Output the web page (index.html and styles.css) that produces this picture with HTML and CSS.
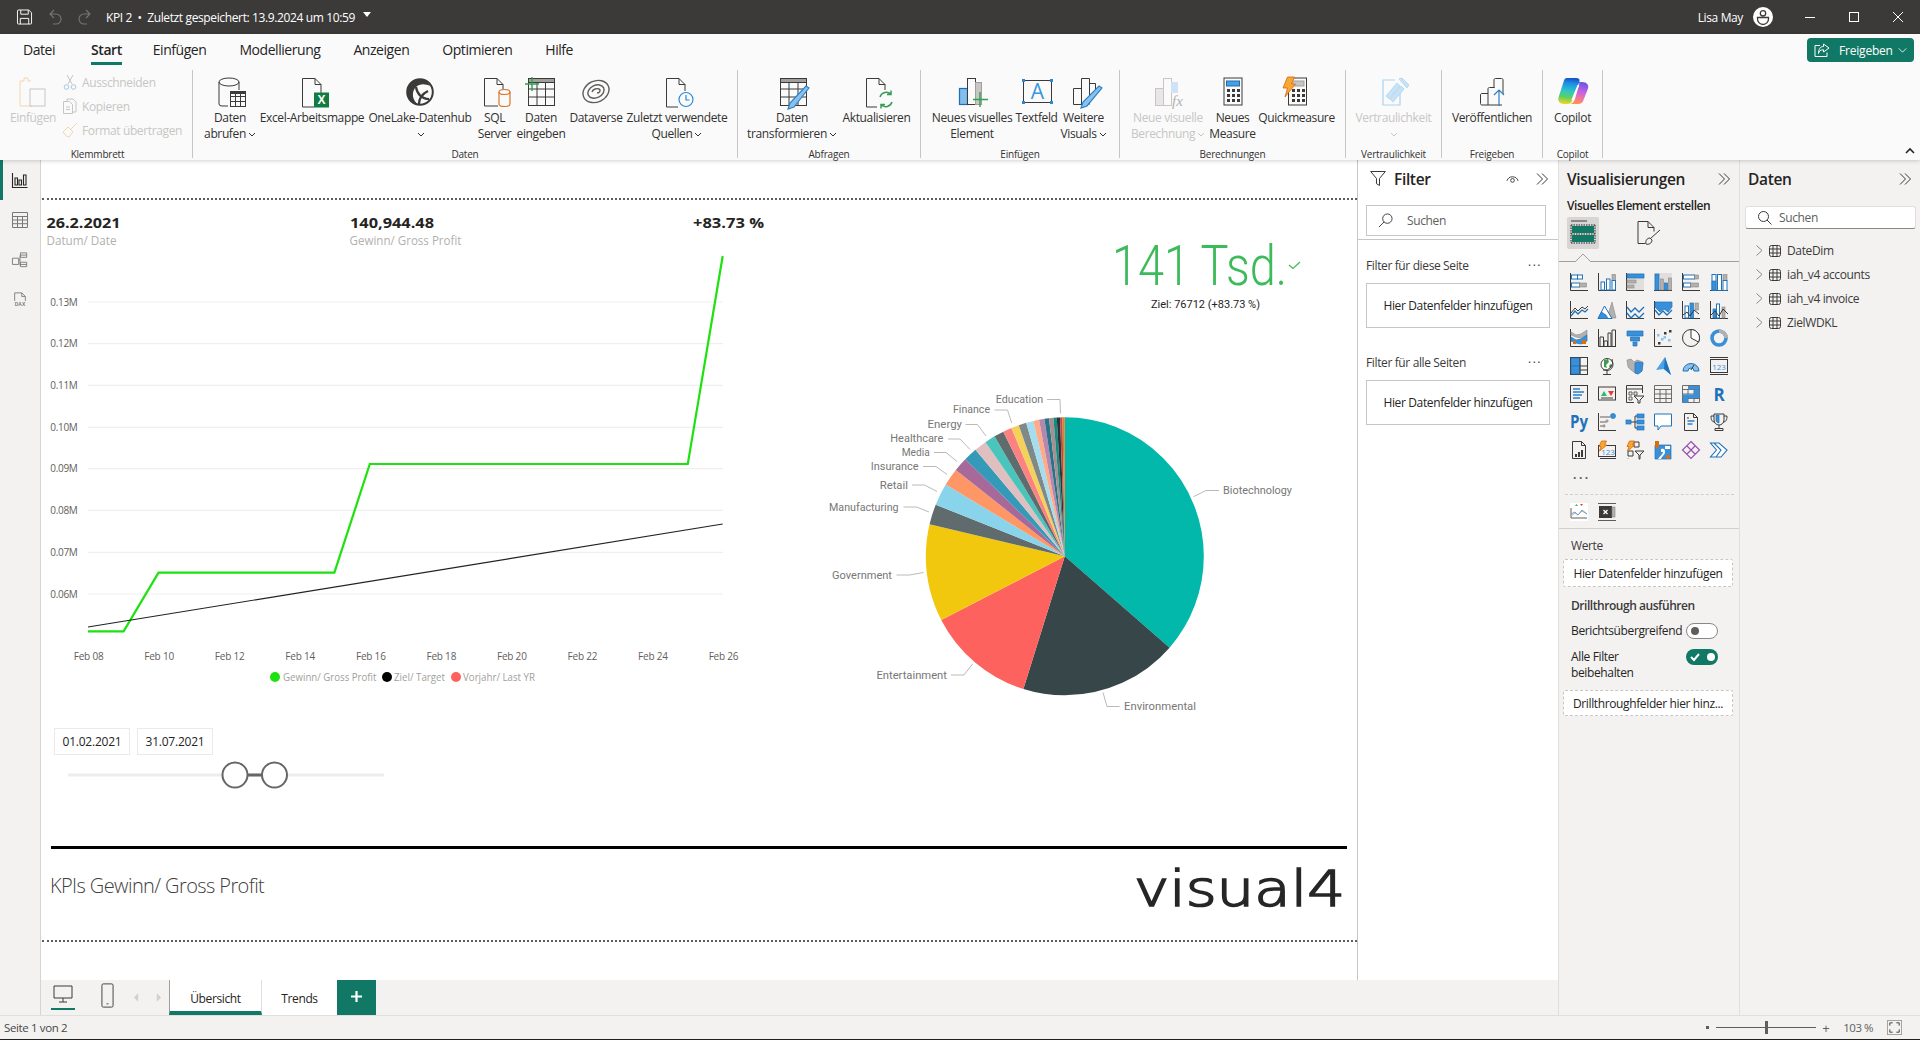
FILE: index.html
```html
<!DOCTYPE html>
<html lang="de">
<head>
<meta charset="utf-8">
<title>KPI 2 - Power BI Desktop</title>
<link rel="stylesheet" href="styles.css">
</head>
<body>
<div class="app">

  <header class="titlebar">
    <div class="qa">
      <svg class="qa-save" viewBox="0 0 16 16"><path class="tw" d="M.5 1.5a1 1 0 0 1 1-1h11l3 3v11a1 1 0 0 1-1 1h-13a1 1 0 0 1-1-1zM4 .5V5h8V.5M3.5 15.5V9.5h9v6"/></svg>
      <svg class="qa-undo" viewBox="0 0 14 16"><path class="td" d="M6 1 2 5l4 4M2 5h6a4.500 4.500 0 0 1 0 10H5"/></svg>
      <svg class="qa-redo" viewBox="0 0 14 16"><path class="td" d="M8 1l4 4-4 4M12 5H6a4.500 4.500 0 0 0 0 10h3"/></svg>
    </div>
    <span class="doc-title">KPI 2 &nbsp;•&nbsp; Zuletzt gespeichert: 13.9.2024 um 10:59</span>
    <svg class="doc-drop" viewBox="0 0 8 5"><path class="tf" d="M0 0h8L4 5z"/></svg>
    <div class="user">
      <span class="user-name">Lisa May</span>
      <svg class="avatar" viewBox="0 0 20 20"><circle class="av-bg" cx="10" cy="10" r="10"/><circle class="av-l" cx="10" cy="6.300" r="2.700"/><path class="av-l" d="M4.500 10.500h11v1.500a5.500 5.500 0 0 1-11 0z"/></svg>
    </div>
    <div class="win">
      <svg class="win-i" viewBox="0 0 10 10"><path class="tw" d="M0 5.500h10"/></svg>
      <svg class="win-i" viewBox="0 0 10 10"><rect class="tw" x=".5" y=".5" width="9" height="9"/></svg>
      <svg class="win-i" viewBox="0 0 10 10"><path class="tw" d="M0 0l10 10M10 0 0 10"/></svg>
    </div>
  </header>

  <section class="ribbon">
    <nav class="tabs">
      <span class="tab tab-first">Datei</span>
      <span class="tab active">Start</span>
      <span class="tab">Einfügen</span>
      <span class="tab">Modellierung</span>
      <span class="tab">Anzeigen</span>
      <span class="tab">Optimieren</span>
      <span class="tab">Hilfe</span>
      <button class="share">
        <svg class="share-i" viewBox="0 0 16 14"><path class="sw" d="M6 2.500H1v11h12V9.500M9.500 1 15 5 9.500 9V6.800C6.500 6.800 5 8 4.500 10.500 4.500 6.500 6 3.500 9.500 3.500z"/></svg>
        <span>Freigeben</span>
        <svg class="share-c" viewBox="0 0 10 6"><path class="sw" d="M.5.500 5 5 9.500.5"/></svg>
      </button>
    </nav>
    <div class="groups">

      <div class="grp g-clip">
        <div class="grp-body">
          <div class="rb rb-paste off">
            <svg class="ri" viewBox="0 0 32 32"><path class="oo" d="M14 4h-3V1h-4v3H3v25h12"/><rect class="og" x="13" y="12" width="15" height="17"/></svg>
            <span class="rl">Einfügen</span>
          </div>
          <div class="small off">
            <div class="sm"><svg class="smi" viewBox="0 0 16 16"><path class="og" d="M5 1l5 9M11 1 6 10"/><circle class="ob" cx="4.500" cy="13" r="2.300"/><circle class="ob" cx="11.500" cy="13" r="2.300"/></svg><span>Ausschneiden</span></div>
            <div class="sm"><svg class="smi" viewBox="0 0 16 16"><path class="og" d="M5 3V1h6l3 3v10h-3M1.500 3.500h6l3 3v9h-9zM4 9h4M4 11.500h4"/></svg><span>Kopieren</span></div>
            <div class="sm"><svg class="smi" viewBox="0 0 16 16"><path class="oo" d="M1 10l5-5 5 5-4 5C5 15 3 13 1 10zM9 7l6-6"/></svg><span>Format übertragen</span></div>
          </div>
        </div>
        <div class="grp-label">Klemmbrett</div>
      </div>

      <div class="grp g-data">
        <div class="grp-body">
          <div class="rb">
            <svg class="ri" viewBox="0 0 32 32"><ellipse class="ik" cx="15" cy="5" rx="10" ry="4"/><path class="ik" d="M5 5v22q0 2 3 2h6M25 5v8"/><rect class="ik iw" x="16.500" y="14.500" width="15" height="15"/><path class="ik" d="M16.500 19.500h15M16.500 24.500h15M21.500 14.500v15M26.500 14.500v15"/><rect class="id" x="16.500" y="14.500" width="15" height="2.500"/></svg>
            <span class="rl">Daten<br>abrufen<svg class="chev" viewBox="0 0 8 5"><path class="cv" d="M1 1l3 3 3-3"/></svg></span>
          </div>
          <div class="rb">
            <svg class="ri" viewBox="0 0 32 32"><path class="ik" d="M18 30H6.500V1.500H19l6 6V16M19 1.500v6h6"/><rect class="xl" x="18" y="15.500" width="15" height="15"/><text class="xl-t" x="25.500" y="27">X</text></svg>
            <span class="rl">Excel-Arbeitsmappe</span>
          </div>
          <div class="rb">
            <svg class="ri" viewBox="0 0 32 32"><circle class="ol" cx="16" cy="15" r="12.800"/><path class="id" d="M16 2C8 2 3 8 3 15c0 8 6 13 12 13C8 24 7 15 12 10c4-4 10-3 14-1-2-4-6-7-10-7z"/><path class="ol2" d="M12 10c1 7 6 12 13 12M15 27c0-6 3-10 9-13"/></svg>
            <span class="rl">OneLake-Datenhub<br><svg class="chev" viewBox="0 0 8 5"><path class="cv" d="M1 1l3 3 3-3"/></svg></span>
          </div>
          <div class="rb">
            <svg class="ri" viewBox="0 0 32 32"><path class="ik" d="M19 29H5.500V1.500H18l6 6V12M18 1.500v6h6"/><path class="oc iw" d="M20 15v12q0 2.500 5.500 2.500T31 27V15q0-2.500-5.500-2.500T20 15z"/><path class="oc" d="M20 15q0 2.500 5.500 2.500T31 15"/></svg>
            <span class="rl">SQL<br>Server</span>
          </div>
          <div class="rb">
            <svg class="ri" viewBox="0 0 32 32"><rect class="ik" x="3.500" y="1.500" width="26" height="27"/><rect class="ig" x="3.500" y="1.500" width="26" height="4"/><path class="ik" d="M3.500 12h26M3.500 20h26M12 5.500v23M20.500 5.500v23"/><path class="pl" d="M7 0v14M0 7h14"/></svg>
            <span class="rl">Daten<br>eingeben</span>
          </div>
          <div class="rb">
            <svg class="ri" viewBox="0 0 32 32"><ellipse class="iz" cx="16" cy="14.500" rx="13.500" ry="10.500" transform="rotate(-25 16 14.500)"/><ellipse class="iz" cx="16" cy="14.500" rx="8.500" ry="6.200" transform="rotate(-25 16 14.500)"/><path class="iz" d="M12 15c1-3 5-4 7-3s1 4-2 4"/></svg>
            <span class="rl">Dataverse</span>
          </div>
          <div class="rb">
            <svg class="ri" viewBox="0 0 32 32"><path class="ik" d="M17 30H5.500V1.500H18l6 6V14M18 1.500v6h6"/><circle class="cl iw" cx="25" cy="22.500" r="7"/><path class="cl" d="M25 18v5h3.500"/></svg>
            <span class="rl">Zuletzt verwendete<br>Quellen<svg class="chev" viewBox="0 0 8 5"><path class="cv" d="M1 1l3 3 3-3"/></svg></span>
          </div>
        </div>
        <div class="grp-label">Daten</div>
      </div>

      <div class="grp g-query">
        <div class="grp-body">
          <div class="rb">
            <svg class="ri" viewBox="0 0 32 32"><rect class="ik" x="4.500" y="1.500" width="26" height="27"/><rect class="ig" x="4.500" y="1.500" width="26" height="4"/><path class="ik" d="M4.500 12h26M4.500 20h26M13 5.500v23M22 5.500v23"/><path class="pn" d="M33 11l-3-2L14 26l-2 6 6-2z"/></svg>
            <span class="rl">Daten<br>transformieren<svg class="chev" viewBox="0 0 8 5"><path class="cv" d="M1 1l3 3 3-3"/></svg></span>
          </div>
          <div class="rb">
            <svg class="ri" viewBox="0 0 32 32"><path class="ik" d="M16 30H5.500V1.500H18l6 6V13M18 1.500v6h6"/><path class="rf" d="M19 20a6.500 6.500 0 0 1 11-2.500M31 25a6.500 6.500 0 0 1-11 2.500M30 13.500v4h-4M20 31.500v-4h4"/></svg>
            <span class="rl">Aktualisieren</span>
          </div>
        </div>
        <div class="grp-label">Abfragen</div>
      </div>

      <div class="grp g-insert">
        <div class="grp-body">
          <div class="rb">
            <svg class="ri" viewBox="0 0 32 32"><rect class="bl" x="3.500" y="11.500" width="8" height="16"/><rect class="ik iw" x="11.500" y="1.500" width="8" height="26"/><rect class="ig2" x="19.500" y="5.500" width="6" height="22"/><path class="pl" d="M24 15v15M17 22.500h15"/></svg>
            <span class="rl">Neues visuelles<br>Element</span>
          </div>
          <div class="rb">
            <svg class="ri" viewBox="0 0 32 32"><rect class="ik" x="2.500" y="3.500" width="28" height="22"/><path class="corn" d="M1 2h3v3H1zM29 2h3v3h-3zM1 24h3v3H1zM29 24h3v3h-3z"/><text class="a-t" x="16.500" y="22">A</text></svg>
            <span class="rl">Textfeld</span>
          </div>
          <div class="rb">
            <svg class="ri" viewBox="0 0 32 32"><path class="ik" d="M5.500 27.500v-16h8M13.500 27.500v-26h8v26M21.500 6.500h6v6M5.500 27.500h13"/><path class="pn" d="M34 11l-3-2L15 25l-2 6 6-2z"/></svg>
            <span class="rl">Weitere<br>Visuals<svg class="chev" viewBox="0 0 8 5"><path class="cv" d="M1 1l3 3 3-3"/></svg></span>
          </div>
        </div>
        <div class="grp-label">Einfügen</div>
      </div>

      <div class="grp g-calc">
        <div class="grp-body">
          <div class="rb off">
            <svg class="ri" viewBox="0 0 32 32"><rect class="dg" x="3.500" y="11.500" width="8" height="17"/><rect class="dw" x="11.500" y="1.500" width="8" height="27"/><rect class="dl" x="19.500" y="5.500" width="6" height="10"/><text class="fx" x="20" y="29">fx</text></svg>
            <span class="rl">Neue visuelle<br>Berechnung<svg class="chev" viewBox="0 0 8 5"><path class="cv" d="M1 1l3 3 3-3"/></svg></span>
          </div>
          <div class="rb">
            <svg class="ri" viewBox="0 0 32 32"><rect class="ik" x="7" y="1" width="18" height="27"/><rect class="calc-s" x="9.500" y="4" width="13" height="5"/><path class="dots" d="M10 12h3v3h-3zM15 12h3v3h-3zM20 12h3v3h-3zM10 17h3v3h-3zM15 17h3v3h-3zM20 17h3v3h-3zM10 22h3v3h-3zM15 22h3v3h-3zM20 22h3v3h-3z"/></svg>
            <span class="rl">Neues<br>Measure</span>
          </div>
          <div class="rb">
            <svg class="ri" viewBox="0 0 32 32"><rect class="ik" x="7.500" y="1" width="18" height="27"/><rect class="ig2" x="10" y="4" width="13" height="5"/><path class="dots" d="M11 12h3v3h-3zM16 12h3v3h-3zM21 12h3v3h-3zM11 17h3v3h-3zM16 17h3v3h-3zM21 17h3v3h-3zM11 22h3v3h-3zM16 22h3v3h-3zM21 22h3v3h-3z"/><path class="bolt" d="M6.500 0h7l-3 7h4L4 20l2.500-9H2z"/></svg>
            <span class="rl">Quickmeasure</span>
          </div>
        </div>
        <div class="grp-label">Berechnungen</div>
      </div>

      <div class="grp g-sens">
        <div class="grp-body">
          <div class="rb off">
            <svg class="ri" viewBox="0 0 32 32"><path class="lb" d="M17 3H5v25h17V13"/><path class="lbf" d="M8 19 19 6l3 3L11 22zM12 22 23 9l3 3-11 13zM21 2l3-1 7 7-2 3z"/></svg>
            <span class="rl">Vertraulichkeit<br><svg class="chev" viewBox="0 0 8 5"><path class="cv" d="M1 1l3 3 3-3"/></svg></span>
          </div>
        </div>
        <div class="grp-label">Vertraulichkeit</div>
      </div>

      <div class="grp g-share">
        <div class="grp-body">
          <div class="rb">
            <svg class="ri" viewBox="0 0 32 32"><path class="ik" d="M6 28h20M6 28c-1 0-1.500-.500-1.500-1.500V18c0-1 .5-1.500 1.500-1.500h6M12 28V12c0-1 .5-1.500 1.500-1.500h5M18 11V3c0-1 .5-1.500 1.500-1.500h6c1 0 1.500.500 1.500 1.500v14"/><path class="up" d="M23 29V13M18 18l5-5 5 5"/></svg>
            <span class="rl">Veröffentlichen</span>
          </div>
        </div>
        <div class="grp-label">Freigeben</div>
      </div>

      <div class="grp g-copilot">
        <div class="grp-body">
          <div class="rb">
            <svg class="ri" viewBox="0 0 32 32">
              <defs>
                <linearGradient id="cpa" x1="0.500" y1="0" x2="0.400" y2="1"><stop offset="0" stop-color="#1553c7"/><stop offset=".2" stop-color="#1b8fe6"/><stop offset=".5" stop-color="#2fc6c8"/><stop offset=".75" stop-color="#63d05c"/><stop offset="1" stop-color="#f5d423"/></linearGradient>
                <linearGradient id="cpb" x1="0.600" y1="0" x2="0.400" y2="1"><stop offset="0" stop-color="#6c55e2"/><stop offset=".45" stop-color="#cc62e2"/><stop offset=".8" stop-color="#f97a8a"/><stop offset="1" stop-color="#fb9a3f"/></linearGradient>
              </defs>
              <path class="cp-a" d="M10 1h9c3 0 4 1.500 3.500 3.500L16 22c-.8 3-3 5-6 5H7c-4.500 0-6.500-3-5.500-6.500L6.500 5C7.200 2.500 8 1 10 1z"/>
              <path class="cp-b" d="M22 5h3c5 0 7 3 6 6.500L26.500 23c-.8 2.500-2.500 4-5.500 4h-9c3 0 5-2 6-5l4-14c.4-1.500.3-3 0-3z"/>
              <path class="cp-w" d="M20.500 8l1.700.3L16 23.500l-1.800-.3z"/>
            </svg>
            <span class="rl">Copilot</span>
          </div>
        </div>
        <div class="grp-label">Copilot</div>
      </div>

      <svg class="collapse" viewBox="0 0 10 6"><path class="col" d="M1 5l4-4 4 4"/></svg>
    </div>
  </section>

  <div class="main">
    <aside class="rail">
      <div class="rail-btn rail-on"><svg class="rail-i" viewBox="0 0 16 16"><path class="rk" d="M.5 1v14.500h15M3 13V6h2.500v7zM7 13V8h2.500v5zM11.500 13V3H14v10z"/></svg></div>
      <div class="rail-btn"><svg class="rail-i" viewBox="0 0 16 16"><path class="rg" d="M.5.500h15v15H.5zM.5 4.500h15M.5 8h15M.5 11.700h15M5.500 4.500v11M10.500 4.500v11"/></svg></div>
      <div class="rail-btn"><svg class="rail-i" viewBox="0 0 18 18"><path class="rg" d="M.5 7h7v7h-7zM9.500 1h7v5h-7zM9.500 11.500h7v5h-7zM9.500 3.500h7M9.500 14h7M7.500 9H9M9 4v11"/></svg></div>
      <div class="rail-btn"><svg class="rail-i" viewBox="0 0 18 18"><path class="rg" d="M3 10V1h8l4 4v5M11 1v4h4"/><text class="dax" x="9" y="16">DAX</text></svg></div>
    </aside>

    <div class="center">
      <div class="work">
        <main class="canvas">
          <svg class="v-line" viewBox="41 200 760 500">
            <text class="hd" x="46.500" y="228" textLength="74" lengthAdjust="spacingAndGlyphs">26.2.2021</text>
            <text class="hs" x="46.500" y="245" textLength="70" lengthAdjust="spacingAndGlyphs">Datum/ Date</text>
            <text class="hd" x="350" y="228" textLength="84" lengthAdjust="spacingAndGlyphs">140,944.48</text>
            <text class="hs" x="349.500" y="245" textLength="112" lengthAdjust="spacingAndGlyphs">Gewinn/ Gross Profit</text>
            <text class="hd" x="693" y="228" textLength="71" lengthAdjust="spacingAndGlyphs">+83.73 %</text>
            <path class="grid" d="M88 302h635M88 343.700h635M88 385.300h635M88 427.300h635M88 468.700h635M88 510.300h635M88 552.300h635M88 594h635"/>
            <text class="yl" x="77.500" y="305.500">0.13M</text>
            <text class="yl" x="77.500" y="347">0.12M</text>
            <text class="yl" x="77.500" y="389">0.11M</text>
            <text class="yl" x="77.500" y="430.500">0.10M</text>
            <text class="yl" x="77.500" y="472">0.09M</text>
            <text class="yl" x="77.500" y="514">0.08M</text>
            <text class="yl" x="77.500" y="555.500">0.07M</text>
            <text class="yl" x="77.500" y="597.500">0.06M</text>
            <polyline class="ln-g" points="88,631.300 123.600,631.300 158.500,572.700 334.400,572.700 369.800,464 687.800,464 722.700,256"/>
            <line class="ln-k" x1="88" y1="627" x2="722.700" y2="524"/>
            <text class="xl-l" x="88.600" y="660">Feb 08</text>
            <text class="xl-l" x="159.100" y="660">Feb 10</text>
            <text class="xl-l" x="229.700" y="660">Feb 12</text>
            <text class="xl-l" x="300.200" y="660">Feb 14</text>
            <text class="xl-l" x="370.800" y="660">Feb 16</text>
            <text class="xl-l" x="441.300" y="660">Feb 18</text>
            <text class="xl-l" x="511.800" y="660">Feb 20</text>
            <text class="xl-l" x="582.400" y="660">Feb 22</text>
            <text class="xl-l" x="652.900" y="660">Feb 24</text>
            <text class="xl-l" x="723.500" y="660">Feb 26</text>
            <circle class="lg-g" cx="275" cy="677" r="5"/>
            <text class="lg" x="283" y="680.500" textLength="93.500" lengthAdjust="spacingAndGlyphs">Gewinn/ Gross Profit</text>
            <circle class="lg-k" cx="387" cy="677" r="5"/>
            <text class="lg" x="394" y="680.500" textLength="51" lengthAdjust="spacingAndGlyphs">Ziel/ Target</text>
            <circle class="lg-r" cx="456" cy="677" r="5"/>
            <text class="lg" x="463" y="680.500" textLength="72" lengthAdjust="spacingAndGlyphs">Vorjahr/ Last YR</text>
          </svg>

          <div class="slicer">
            <div class="dates"><span class="date">01.02.2021</span><span class="date">31.07.2021</span></div>
            <svg class="track" viewBox="0 0 320 30"><path class="trk" d="M0 15h316"/><path class="trk-on" d="M167 15h40"/><circle class="hdl" cx="167" cy="15" r="12.500"/><circle class="hdl" cx="206.500" cy="15" r="12.500"/></svg>
          </div>

          <svg class="v-kpi" viewBox="1100 230 220 90">
            <text class="kpi-n" x="1112" y="285" textLength="175" lengthAdjust="spacingAndGlyphs">141 Tsd.</text>
            <path class="kpi-c" d="M1289 265l4 3.500 7-6.500"/>
            <text class="kpi-t" x="1151" y="307.500" textLength="109" lengthAdjust="spacingAndGlyphs">Ziel: 76712 (+83.73 %)</text>
          </svg>

          <svg class="v-pie" viewBox="820 380 520 350">
            <g class="pie" transform="translate(1 0) rotate(-90 1063.800 556.300)">
              <circle class="s1" cx="1063.800" cy="556.300" r="69.500" pathLength="360" stroke-dasharray="131.100 360"/>
              <circle class="s2" cx="1063.800" cy="556.300" r="69.500" pathLength="360" stroke-dasharray="66.300 360" stroke-dashoffset="-131.100"/>
              <circle class="s3" cx="1063.800" cy="556.300" r="69.500" pathLength="360" stroke-dasharray="45.300 360" stroke-dashoffset="-197.400"/>
              <circle class="s4" cx="1063.800" cy="556.300" r="69.500" pathLength="360" stroke-dasharray="40.700 360" stroke-dashoffset="-242.700"/>
              <circle class="s5" cx="1063.800" cy="556.300" r="69.500" pathLength="360" stroke-dasharray="8.400 360" stroke-dashoffset="-283.400"/>
              <circle class="s6" cx="1063.800" cy="556.300" r="69.500" pathLength="360" stroke-dasharray="9.300 360" stroke-dashoffset="-291.800"/>
              <circle class="s7" cx="1063.800" cy="556.300" r="69.500" pathLength="360" stroke-dasharray="7.300 360" stroke-dashoffset="-301.100"/>
              <circle class="s8" cx="1063.800" cy="556.300" r="69.500" pathLength="360" stroke-dasharray="5.900 360" stroke-dashoffset="-308.400"/>
              <circle class="s9" cx="1063.800" cy="556.300" r="69.500" pathLength="360" stroke-dasharray="5.700 360" stroke-dashoffset="-314.300"/>
              <circle class="s10" cx="1063.800" cy="556.300" r="69.500" pathLength="360" stroke-dasharray="5.200 360" stroke-dashoffset="-320"/>
              <circle class="s11" cx="1063.800" cy="556.300" r="69.500" pathLength="360" stroke-dasharray="4.400 360" stroke-dashoffset="-325.200"/>
              <circle class="s12" cx="1063.800" cy="556.300" r="69.500" pathLength="360" stroke-dasharray="4.100 360" stroke-dashoffset="-329.600"/>
              <circle class="s13" cx="1063.800" cy="556.300" r="69.500" pathLength="360" stroke-dasharray="3.700 360" stroke-dashoffset="-333.700"/>
              <circle class="s14" cx="1063.800" cy="556.300" r="69.500" pathLength="360" stroke-dasharray="3.200 360" stroke-dashoffset="-337.400"/>
              <circle class="s15" cx="1063.800" cy="556.300" r="69.500" pathLength="360" stroke-dasharray="3.200 360" stroke-dashoffset="-340.600"/>
              <circle class="s16" cx="1063.800" cy="556.300" r="69.500" pathLength="360" stroke-dasharray="3.100 360" stroke-dashoffset="-343.800"/>
              <circle class="s17" cx="1063.800" cy="556.300" r="69.500" pathLength="360" stroke-dasharray="2.400 360" stroke-dashoffset="-346.900"/>
              <circle class="s18" cx="1063.800" cy="556.300" r="69.500" pathLength="360" stroke-dasharray="2.200 360" stroke-dashoffset="-349.300"/>
              <circle class="s19" cx="1063.800" cy="556.300" r="69.500" pathLength="360" stroke-dasharray="1.900 360" stroke-dashoffset="-351.500"/>
              <circle class="s20" cx="1063.800" cy="556.300" r="69.500" pathLength="360" stroke-dasharray="1.800 360" stroke-dashoffset="-353.400"/>
              <circle class="s21" cx="1063.800" cy="556.300" r="69.500" pathLength="360" stroke-dasharray="1.400 360" stroke-dashoffset="-355.200"/>
              <circle class="s22" cx="1063.800" cy="556.300" r="69.500" pathLength="360" stroke-dasharray="1.400 360" stroke-dashoffset="-356.600"/>
              <circle class="s23" cx="1063.800" cy="556.300" r="69.500" pathLength="360" stroke-dasharray="1 360" stroke-dashoffset="-358"/>
              <circle class="s24" cx="1063.800" cy="556.300" r="69.500" pathLength="360" stroke-dasharray="1 360" stroke-dashoffset="-359"/>
            </g>
            <path class="ldr" d="M1193.500 496.700 1206 490.500h13M1103 692.500 1107 706.500h12.500M972.500 664 964 675h-13M923.500 572.500 909.500 575h-13M929 512 916.500 507h-13M937 491.500 924.500 485h-12.500M947 474.500 936 466.500h-13M957 461.500 946 452.500h-12M970 449.500 960 439h-12M986 436 977.500 424.500h-12M1011.700 423 1007.500 410h-13M1060.500 413.500 1060 399.500h-13"/>
            <text class="pl-t" x="1223" y="494" textLength="69" lengthAdjust="spacingAndGlyphs">Biotechnology</text>
            <text class="pl-t" x="1124" y="709.500" textLength="72" lengthAdjust="spacingAndGlyphs">Environmental</text>
            <text class="pl-t" x="876.400" y="679" textLength="70.600" lengthAdjust="spacingAndGlyphs">Entertainment</text>
            <text class="pl-t" x="832" y="579" textLength="60" lengthAdjust="spacingAndGlyphs">Government</text>
            <text class="pl-t" x="829" y="511" textLength="69.600" lengthAdjust="spacingAndGlyphs">Manufacturing</text>
            <text class="pl-t" x="879.700" y="489" textLength="28.300" lengthAdjust="spacingAndGlyphs">Retail</text>
            <text class="pl-t" x="870.700" y="470" textLength="47.800" lengthAdjust="spacingAndGlyphs">Insurance</text>
            <text class="pl-t" x="901.700" y="456" textLength="28" lengthAdjust="spacingAndGlyphs">Media</text>
            <text class="pl-t" x="890.300" y="442" textLength="53" lengthAdjust="spacingAndGlyphs">Healthcare</text>
            <text class="pl-t" x="927.600" y="428" textLength="34.400" lengthAdjust="spacingAndGlyphs">Energy</text>
            <text class="pl-t" x="953" y="413" textLength="37" lengthAdjust="spacingAndGlyphs">Finance</text>
            <text class="pl-t" x="995.800" y="403" textLength="47.400" lengthAdjust="spacingAndGlyphs">Education</text>
          </svg>

          <div class="rule"></div>
          <div class="page-title">KPIs Gewinn/ Gross Profit</div>
          <svg class="logo" viewBox="1130 865 220 50"><text class="logo-t" x="1134" y="906" textLength="211" lengthAdjust="spacingAndGlyphs">visual4</text></svg>
          <div class="dots-top"></div>
          <div class="dots-bot"></div>
        </main>

        <aside class="filter">
          <div class="pane-head">
            <svg class="f-ic" viewBox="0 0 16 15"><path class="pk" d="M.7.500h14.600L9.500 7.500v7l-3-1.800V7.500z"/></svg>
            <span class="pane-title f-title">Filter</span>
            <svg class="eye" viewBox="0 0 14 10"><path class="pk2" d="M1 7a6.300 6.300 0 0 1 12 0"/><circle class="pk2" cx="7" cy="6.500" r="2"/></svg>
            <svg class="dbl" viewBox="0 0 12 12"><path class="pk" d="M1 .5 6.500 6 1 11.500M6 .5 11.500 6 6 11.500"/></svg>
          </div>
          <div class="f-search">
            <svg class="s-ic" viewBox="0 0 16 16"><circle class="pk2" cx="10" cy="6" r="5"/><path class="pk2" d="M6.500 9.500 1 15"/></svg>
            <span>Suchen</span>
          </div>
          <div class="f-label f-label-1"><span>Filter für diese Seite</span><span class="more">...</span></div>
          <div class="f-drop">Hier Datenfelder hinzufügen</div>
          <div class="f-label f-label-2"><span>Filter für alle Seiten</span><span class="more">...</span></div>
          <div class="f-drop">Hier Datenfelder hinzufügen</div>
        </aside>
      </div>

      <footer class="pagebar">
        <div class="view-sw">
          <div class="view view-on"><svg class="view-i" viewBox="0 0 20 20"><path class="pk" d="M1 2h18v12H1zM10 14v4M6 18h8"/></svg></div>
          <div class="view"><svg class="view-i" viewBox="0 0 14 26"><rect class="pk" x="1" y=".5" width="12" height="25" rx="1.500"/><path class="pk" d="M6 22h2"/></svg></div>
          <svg class="arr" viewBox="0 0 6 10"><path class="arr-f" d="M5 0v10L0 5z"/></svg>
          <svg class="arr arr-r" viewBox="0 0 6 10"><path class="arr-f" d="M1 0v10l5-5z"/></svg>
        </div>
        <div class="ptab ptab-on">Übersicht</div>
        <div class="ptab ptab-2">Trends</div>
        <div class="ptab-add"><svg class="add-i" viewBox="0 0 12 12"><path class="add" d="M6 0v12M0 6h12"/></svg></div>
      </footer>
    </div>

    <aside class="viz">
      <div class="pane-head">
        <span class="pane-title">Visualisierungen</span>
        <svg class="dbl" viewBox="0 0 12 12"><path class="pk" d="M1 .5 6.500 6 1 11.500M6 .5 11.500 6 6 11.500"/></svg>
      </div>
      <div class="viz-sub">Visuelles Element erstellen</div>
      <div class="viz-build">
        <div class="build-on"><svg class="build-i" viewBox="0 0 24 24"><path class="bt" d="M0 0h16"/><rect class="bgn" x="1" y="5" width="22" height="7"/><rect class="bgn" x="1" y="14" width="22" height="7"/><path class="bt2" d="M0 4h24M0 13h24M0 22h24M0 4v18M24 4v18"/></svg></div>
        <svg class="fmt-i" viewBox="0 0 24 24"><path class="pk" d="M8 22.500H1V.5h10l6 6v4M11 .5v6h6"/><path class="pk" d="M23 9 14 17M9 23c-1-3 1-6 4-6l2 2c0 3-3 5-6 4z"/></svg>
        <svg class="notch" viewBox="0 0 16 8"><path class="nt" d="M0 8 8 0l8 8"/></svg>
      </div>
      <div class="vgrid">
        <svg class="vi" viewBox="0 0 18 18"><path class="a" d="M.5 0v17.500H18"/><rect class="w" x="1.500" y="2" width="6" height="4"/><rect class="w" x="7.500" y="2" width="5" height="4"/><rect class="w" x="1.500" y="10" width="8" height="4"/><rect class="g" x="9.500" y="10" width="7" height="4"/></svg>
        <svg class="vi" viewBox="0 0 18 18"><path class="a" d="M.5 0v17.500H18"/><rect class="w" x="3" y="9" width="3.500" height="8"/><rect class="w" x="8.500" y="6" width="3.500" height="11"/><rect class="g" x="14" y="1.500" width="3.500" height="6"/><rect class="w" x="14" y="7.500" width="3.500" height="9.500"/></svg>
        <svg class="vi" viewBox="0 0 18 18"><rect class="hl" width="18" height="18"/><path class="a" d="M.5 0v17.500H18"/><rect class="b" x="1" y="1" width="17" height="4"/><rect class="g" x="1" y="7" width="9" height="3"/><rect class="g" x="1" y="12" width="7" height="3"/></svg>
        <svg class="vi" viewBox="0 0 18 18"><rect class="hl" width="18" height="18"/><path class="a" d="M0 17.500h18"/><rect class="b" x="1" y="1" width="4" height="16"/><rect class="g" x="6.500" y="6" width="3" height="11"/><rect class="b" x="10.500" y="10" width="3" height="7"/><rect class="g" x="14.500" y="5" width="3" height="12"/></svg>
        <svg class="vi" viewBox="0 0 18 18"><path class="a" d="M.5 0v17.500H18"/><rect class="w" x="1.500" y="2" width="11" height="4"/><rect class="g" x="12.500" y="2" width="4" height="4"/><rect class="w" x="1.500" y="10" width="7" height="4"/><rect class="g" x="8.500" y="10" width="8" height="4"/></svg>
        <svg class="vi" viewBox="0 0 18 18"><path class="a" d="M0 17.500h18"/><rect class="w" x="2" y="1.500" width="4" height="16"/><rect class="b" x="2" y="8" width="4" height="9"/><rect class="w" x="7.500" y="1.500" width="4" height="16"/><rect class="g" x="13" y="1.500" width="4" height="6"/><rect class="w" x="13" y="7.500" width="4" height="10"/></svg>

        <svg class="vi" viewBox="0 0 18 18"><path class="a" d="M.5 0v17.500H18"/><path class="a" d="M1 12l4-5 3 3 4-4 3 2 3-3"/><path class="l" d="M1 15l4-5 3 3 4-4 3 2 3-3"/></svg>
        <svg class="vi" viewBox="0 0 18 18"><path class="g" d="M9 17 14 1l4 16z"/><path class="w" d="M0 17.500 6.500 5 14 17.500z"/><path class="b" d="M0 17.500 3.500 11 8 14l2 3.500z"/></svg>
        <svg class="vi" viewBox="0 0 18 18"><path class="a" d="M.5 0v17.500H18"/><path class="l" d="M1 6l4 5 4-4 4 4 5-5"/><path class="l" d="M1 12l4 5 4-4 4 4 5-5"/></svg>
        <svg class="vi" viewBox="0 0 18 18"><path class="a" d="M.5 0v17.500H18"/><path class="b" d="M1 1h17v5l-4 5-4-3-4 3-5-5z"/><path class="l" d="M1 9l4 5 4-4 4 4 5-5"/></svg>
        <svg class="vi" viewBox="0 0 18 18"><path class="a" d="M.5 0v17.500H18"/><rect class="w" x="3" y="5" width="3.500" height="12"/><rect class="b" x="8" y="2" width="3.500" height="15"/><rect class="g" x="13" y="2" width="3.500" height="7"/><path class="a" d="M1 14l4-3 3 4 4-6 5 4"/></svg>
        <svg class="vi" viewBox="0 0 18 18"><path class="a" d="M.5 0v17.500H18"/><rect class="b" x="3" y="8" width="3" height="9"/><rect class="w" x="6.500" y="3" width="3" height="14"/><rect class="g" x="12" y="6" width="3" height="11"/><path class="a" d="M1 14l4-4 4 5 4-7 5 5"/></svg>

        <svg class="vi" viewBox="0 0 18 18"><path class="a" d="M.5 0v17.500H18"/><path class="g" d="M1 3l5 3 5-1 6-4v5l-6 3-5-1-5-2z"/><path class="b" d="M1 8l5 3 5-1 6-4v6l-6 3-5-1-5-2z"/><path class="or" d="M3 12h3v3H3zM12 11h4v4h-4z"/></svg>
        <svg class="vi" viewBox="0 0 18 18"><path class="a" d="M.5 0v17.500H18"/><path class="ww" d="M2 17V8h3.500v9M6 17V12h3.500v5M10 17V4h3v13M14 17V1h3.500v16"/></svg>
        <svg class="vi" viewBox="0 0 18 18"><path class="b" d="M1 2h16v5H1zM4.500 8h9v4h-9zM7 13h4v4H7z"/></svg>
        <svg class="vi" viewBox="0 0 18 18"><path class="a" d="M.5 0v17.500H18"/><path class="dk" d="M4 13h2.500v2.500H4zM10 3h2.500v2.500H10zM15 1h2.500v2.500H15z"/><path class="lbx" d="M3 5h2.500v2.500H3zM7 9h2.500v2.500H7zM14 10h2.500v2.500H14zM9.500 7H12v2.500H9.500z"/></svg>
        <svg class="vi" viewBox="0 0 18 18"><circle class="a" cx="9" cy="9" r="8.500"/><path class="piew" d="M9 .5A8.500 8.500 0 0 1 16.500 13L9 9z"/></svg>
        <svg class="vi" viewBox="0 0 18 18"><circle class="don" cx="9" cy="9" r="7"/><path class="don2" d="M9 2a7 7 0 0 1 7 7"/></svg>

        <svg class="vi" viewBox="0 0 18 18"><rect class="a" x=".5" y=".5" width="17" height="17"/><rect class="b" x="1" y="1" width="9" height="8"/><rect class="b" x="1" y="9" width="9" height="8"/><path class="a" d="M10 .5v17M10 9h8M10 13h8"/></svg>
        <svg class="vi" viewBox="0 0 18 18"><circle class="glb" cx="9" cy="7.500" r="6"/><path class="grn" d="M6 3l4-1 1 3-3 3 1 3-3-1zM12 7l2 1-1 3-2-1z"/><path class="a" d="M14 2a8 8 0 0 1-9 11M9 14v3M5 17.500h8"/></svg>
        <svg class="vi" viewBox="0 0 18 18"><path class="g" d="M1 3l4-1 3 3 3-2 6 2-1 9-4 3-3-1-4-3-3-3z"/><path class="b" d="M9 6l3-1 5 1-1 8-4 3-3-1z"/></svg>
        <svg class="vi" viewBox="0 0 18 18"><path class="azr" d="M11 0 17 18 10 12 2 13z"/><path class="azr2" d="M11 0 10 12 17 18z"/></svg>
        <svg class="vi" viewBox="0 0 18 18"><path class="gau" d="M1 14a8 7.500 0 0 1 16 0h-5a3 3 0 0 0-6 0z"/><path class="a" d="M9 13l3-5"/></svg>
        <svg class="vi" viewBox="0 0 18 18"><rect class="a" x=".5" y="2.500" width="17" height="13"/><path class="a" d="M0 .5h18M0 17.500h18"/><text class="vt12" x="9" y="12.500">123</text></svg>

        <svg class="vi" viewBox="0 0 18 18"><rect class="a" x=".5" y=".5" width="17" height="17"/><path class="bs" d="M3 4h7M3 7h11M3 10h9M3 13h7"/></svg>
        <svg class="vi" viewBox="0 0 18 18"><rect class="a" x=".5" y="2" width="17" height="13"/><path class="tg" d="M3 11 6 6l3 5z"/><path class="tr" d="M10 6h6l-3 5z"/><path class="a" d="M3 13h12"/></svg>
        <svg class="vi" viewBox="0 0 18 18"><path class="a" d="M.5 17.500V.5h16V8M.5 4h16M.5 17.500H8"/><path class="g2" d="M3 7h3v3H3zM8 7h3v3H8zM3 12h3v3H3z"/><path class="a" d="M8 11h10l-4 4v3h-2v-3z"/></svg>
        <svg class="vi" viewBox="0 0 18 18"><path class="tb" d="M.5.500h17v17H.5zM.5 4.500h17M.5 9h17M.5 13.500h17M6 4.500v13M12 4.500v13"/></svg>
        <svg class="vi" viewBox="0 0 18 18"><path class="tb" d="M.5.500h17v17H.5zM.5 4.500h17M.5 9h17M.5 13.500h17M6 4.500v13M12 4.500v13"/><path class="bf" d="M6 1h11.500v3.500H6zM12 5h5.500v8H12zM6 9.500h6v4H6zM1 9.500h5v8H1z"/></svg>
        <svg class="vi" viewBox="0 0 18 18"><text class="vr" x="9" y="15.500">R</text></svg>

        <svg class="vi" viewBox="0 0 18 18"><text class="vpy" x="9" y="14.500" textLength="18" lengthAdjust="spacingAndGlyphs">Py</text></svg>
        <svg class="vi" viewBox="0 0 18 18"><path class="a" d="M.5 0v17.500H18"/><path class="a2" d="M2 4h10M2 9h6l2-1M2 13h3l2-1"/><circle class="b" cx="15" cy="3" r="2.500"/><circle class="g" cx="9" cy="8" r="1.200"/><circle class="g" cx="6" cy="13" r="1.200"/></svg>
        <svg class="vi" viewBox="0 0 18 18"><rect class="b" x="0" y="7" width="5" height="4"/><path class="a" d="M5 9h4M9 3v12M9 3h2M9 9h2M9 15h2"/><rect class="b" x="11" y="1" width="7" height="4"/><rect class="b" x="11" y="7" width="7" height="4"/><rect class="b" x="11" y="13" width="7" height="4"/></svg>
        <svg class="vi" viewBox="0 0 18 18"><path class="qa2" d="M.5 1h17v12H7l-3 4v-4H.5z"/></svg>
        <svg class="vi" viewBox="0 0 18 18"><path class="a" d="M2.500 17.500V.5h9l4 4v13zM11.500.5v4h4"/><path class="bs" d="M5.500 8h7M5.500 11h5"/><path class="a" d="M5 5h2"/></svg>
        <svg class="vi" viewBox="0 0 18 18"><path class="a" d="M4 1h10v6a5 5 0 0 1-10 0zM4 3H1c0 4 1 6 4 6M14 3h3c0 4-1 6-4 6M9 12v3M5 17.500h8v-2H5z"/><path class="b" d="M6 2h3v8c-2 0-3-2-3-3z"/></svg>

        <svg class="vi" viewBox="0 0 18 18"><path class="a" d="M2.500 17.500V.5h9l4 4v13zM11.500.5v4h4"/><path class="dk2" d="M5 13h2v3H5zM8 11h2v5H8zM11 9h2v7h-2z"/></svg>
        <svg class="vi" viewBox="0 0 18 18"><rect class="a" x=".5" y="4.500" width="17" height="11"/><path class="a" d="M2 17.500h16"/><text class="vt12" x="10" y="14">123</text><path class="bolt" d="M3.500 0h5l-2 4h2.500L1.500 10l1.500-4.500H1z"/></svg>
        <svg class="vi" viewBox="0 0 18 18"><path class="a" d="M8 1h5v5H8zM2 10h5v5H2zM2 17.500V17M9 10h9l-4 4v4h-1v-4z"/><path class="bolt" d="M3.500 0h5l-2 4h2.500L1.500 10l1.500-4.500H1z"/></svg>
        <svg class="vi" viewBox="0 0 18 18"><path class="b" d="M1 4h16v14H1z"/><path class="w2" d="M7 8c3-1 4 0 4 3s-3 4-4 7H4c2-3 5-5 5-7H7zM11 5h5v3h-5z"/><path class="or" d="M1 0h4v5l-2 3-2-3zM14 14a2 2 0 1 1 0 4 2 2 0 0 1 0-4z"/></svg>
        <svg class="vi" viewBox="0 0 18 18"><path class="pa" d="M9 .5 17.500 9 9 17.500.5 9zM5 5l8 8M13 5l-8 8"/></svg>
        <svg class="vi" viewBox="0 0 18 18"><path class="au" d="M.5 2H9l8 7-6 7H.5l6-7zM4 2l7 7-5 7"/></svg>
      </div>
      <div class="more-row">...</div>
      <div class="dash-line"></div>
      <div class="custom">
        <svg class="vi cust" viewBox="0 0 18 18"><rect class="wf" width="18" height="18"/><path class="tg" d="M5 3h3L6.500 1z"/><path class="tr" d="M10 1h3l-1.500 2z"/><path class="a2" d="M1 5v10h16"/><path class="or2" d="M1 13l4-3 3 2 4-4 5 3"/><path class="bs2" d="M1 11l4-2 3 3 4-5 5 4"/></svg>
        <svg class="vi cust" viewBox="0 0 18 18"><path class="a2" d="M0 .5h18M0 17.500h18"/><rect class="dk2" x="1" y="3" width="13" height="12"/><rect class="g" x="14" y="4" width="3" height="10"/><path class="xw" d="M5.500 7l4 4M9.500 7l-4 4"/></svg>
      </div>
      <div class="fields">
        <div class="fld-l">Werte</div>
        <div class="fld-drop fld-d1">Hier Datenfelder hinzufügen</div>
        <div class="fld-h">Drillthrough ausführen</div>
        <div class="fld-row fld-r1"><span>Berichtsübergreifend</span><span class="tog tog-off"><i class="knob"></i></span></div>
        <div class="fld-row fld-r2"><span>Alle Filter<br>beibehalten</span><span class="tog tog-on"><svg class="tog-c" viewBox="0 0 10 8"><path class="tc" d="M1 4l3 3 5-6"/></svg><i class="knob knob-w"></i></span></div>
        <div class="fld-drop fld-d2">Drillthroughfelder hier hinz...</div>
      </div>
    </aside>

    <aside class="data">
      <div class="pane-head">
        <span class="pane-title">Daten</span>
        <svg class="dbl" viewBox="0 0 12 12"><path class="pk" d="M1 .5 6.500 6 1 11.500M6 .5 11.500 6 6 11.500"/></svg>
      </div>
      <div class="d-search">
        <svg class="d-ic" viewBox="0 0 14 14"><circle class="pk2" cx="5.500" cy="5.500" r="5"/><path class="pk2" d="M9 9l4.500 4.500"/></svg>
        <span>Suchen</span>
      </div>
      <div class="tree">
        <div class="node"><svg class="nc" viewBox="0 0 7 11"><path class="nch" d="M.5.500l5.500 5-5.500 5"/></svg><svg class="nt-i" viewBox="0 0 12 12"><rect class="ntb" x=".5" y=".5" width="11" height="11" rx="2"/><path class="ntb" d="M.5 4h11M.5 8h11M4 .5v11M8 .5v11"/></svg><span>DateDim</span></div>
        <div class="node"><svg class="nc" viewBox="0 0 7 11"><path class="nch" d="M.5.500l5.500 5-5.500 5"/></svg><svg class="nt-i" viewBox="0 0 12 12"><rect class="ntb" x=".5" y=".5" width="11" height="11" rx="2"/><path class="ntb" d="M.5 4h11M.5 8h11M4 .5v11M8 .5v11"/></svg><span>iah_v4 accounts</span></div>
        <div class="node"><svg class="nc" viewBox="0 0 7 11"><path class="nch" d="M.5.500l5.500 5-5.500 5"/></svg><svg class="nt-i" viewBox="0 0 12 12"><rect class="ntb" x=".5" y=".5" width="11" height="11" rx="2"/><path class="ntb" d="M.5 4h11M.5 8h11M4 .5v11M8 .5v11"/></svg><span>iah_v4 invoice</span></div>
        <div class="node"><svg class="nc" viewBox="0 0 7 11"><path class="nch" d="M.5.500l5.500 5-5.500 5"/></svg><svg class="nt-i" viewBox="0 0 12 12"><rect class="ntb" x=".5" y=".5" width="11" height="11" rx="2"/><path class="ntb" d="M.5 4h11M.5 8h11M4 .5v11M8 .5v11"/></svg><span>ZielWDKL</span></div>
      </div>
    </aside>
  </div>

  <footer class="status">
    <span class="st-page">Seite 1 von 2</span>
    <div class="st-zoom">
      <span class="z-minus"></span>
      <span class="z-track"><i class="z-thumb"></i></span>
      <span class="z-plus">+</span>
      <span class="z-val">103 %</span>
      <svg class="z-fit" viewBox="0 0 16 16"><rect class="zf1" x=".5" y=".5" width="15" height="15"/><path class="zf2" d="M3 6V3h3M10 3h3v3M13 10v3h-3M6 13H3v-3"/></svg>
    </div>
  </footer>
</div>
</body>
</html>
```
FILE: styles.css
```css
* { box-sizing: border-box; }
html, body { margin: 0; padding: 0; background: #f3f2f1; }
body { font-family: "Open Sans", "Noto Sans", sans-serif; font-size: 12px; color: #252423; letter-spacing: -0.37px; overflow: hidden; }
svg { display: block; overflow: visible; }
svg text { letter-spacing: 0; }
.app { width: 1920px; height: 1040px; display: flex; flex-direction: column; overflow: hidden; border-bottom: 1px solid #1f1f1f; }

/* title bar */
.titlebar { height: 34px; background: #3b3a39; color: #fff; display: flex; align-items: center; flex: none; }
.qa { display: flex; align-items: center; margin-left: 17px; }
.qa-save { width: 15px; height: 16px; }
.qa-undo { width: 14px; height: 16px; margin-left: 16px; }
.qa-redo { width: 14px; height: 16px; margin-left: 16px; }
.tw { fill: none; stroke: #fff; stroke-width: 1; }
.td { fill: none; stroke: #777573; stroke-width: 1.1; }
.tf { fill: #fff; }
.doc-title { margin-left: 14px; font-size: 12px; white-space: nowrap; }
.doc-drop { width: 8px; height: 5px; margin: -5px 0 0 8px; }
.user { margin-left: auto; display: flex; align-items: center; }
.user-name { font-size: 12px; }
.avatar { width: 20px; height: 20px; margin-left: 10px; }
.av-bg { fill: #fff; }
.av-l { fill: none; stroke: #3b3a39; stroke-width: 1.3; }
.win { display: flex; align-items: center; margin-left: 32px; margin-right: 17px; gap: 34px; }
.win-i { width: 10px; height: 10px; }

/* ribbon */
.ribbon { height: 126px; background: #fafafa; flex: none; position: relative; z-index: 3; box-shadow: 0 1px 4px rgba(0,0,0,.18); }
.tabs { height: 36px; display: flex; align-items: flex-start; padding-left: 23px; }
.tab { font-size: 14px; height: 31px; padding-top: 6px; line-height: 20px; margin-right: 33px; color: #252423; letter-spacing: -0.45px; }
.tab-first { margin-right: 36px; }
.tab.active { font-weight: 600; border-bottom: 3px solid #117865; margin-right: 31px; }
.share { margin: 4px 6px 0 auto; width: 107px; height: 24px; background: #117865; color: #fff; border: 0; border-radius: 4px; display: flex; align-items: center; padding: 0 0 0 7px; font: 12px "Open Sans", sans-serif; letter-spacing: -0.2px; }
.share-i { width: 16px; height: 14px; margin-right: 9px; }
.share-c { width: 9px; height: 5px; margin-left: 5px; }
.sw { fill: none; stroke: #fff; stroke-width: 1; }

.groups { display: flex; height: 88px; position: relative; }
.grp { display: flex; flex-direction: column; border-right: 1px solid #c8c6c4; flex: none; height: 88px; }
.grp-body { display: grid; grid-auto-flow: column; height: 75.7px; flex: none; }
.grp-label { flex: none; height: 16px; line-height: 16px; text-align: center; font-size: 10px; color: #323130; letter-spacing: -0.2px; }
.g-clip { width: 193px; }
.g-clip .grp-body { padding-left: 8px; grid-template-columns: 50px auto; justify-content: start; }
.g-clip .grp-label { padding-left: 3px; }
.g-data { width: 545px; }
.g-data .grp-body { padding-left: 10px; grid-template-columns: 54px 110px 106px 43px 50px 60px 102px; }
.g-query { width: 183px; }
.g-query .grp-body { padding-left: 8px; grid-template-columns: 92px 77px; }
.g-insert { width: 199px; }
.g-insert .grp-body { padding-left: 7px; grid-template-columns: 88px 41px 53px; }
.g-calc { width: 226px; }
.g-calc .grp-body { padding-left: 6px; grid-template-columns: 84px 45px 83px; }
.g-sens { width: 96px; }
.g-sens .grp-body { padding-left: 4px; grid-template-columns: 87px; }
.g-share { width: 101px; }
.g-share .grp-body { padding-left: 5px; grid-template-columns: 90px; }
.g-copilot { width: 60px; }
.g-copilot .grp-body { padding-left: 5px; grid-template-columns: 49px; }

.rb { display: flex; flex-direction: column; align-items: center; padding-top: 7px; min-width: 0; }
.ri { width: 32px; height: 32px; flex: none; }
.rl { margin-top: 1px; line-height: 16px; text-align: center; white-space: nowrap; font-size: 12px; color: #323130; }
.off .rl, .off span { color: #c8c6c4; }
.chev { display: inline-block; width: 8px; height: 5px; margin-left: 2px; vertical-align: 1px; }
.cv { fill: none; stroke: #323130; stroke-width: 1; }
.off .cv { stroke: #c8c6c4; }
.small { display: flex; flex-direction: column; margin-left: 4px; }
.sm { height: 24px; display: flex; align-items: center; font-size: 12px; white-space: nowrap; }
.smi { width: 16px; height: 16px; margin-right: 4px; flex: none; }
.oo { fill: none; stroke: #f2d6ac; stroke-width: 1; }
.og { fill: none; stroke: #c8c6c4; stroke-width: 1; }
.ob { fill: none; stroke: #a8c6e0; stroke-width: 1; }
.ik { fill: none; stroke: #3b3a39; stroke-width: 1; }
.iw { fill: #fafafa; }
.id { fill: #3b3a39; }
.ig { fill: #a19f9d; stroke: #3b3a39; stroke-width: 1; }
.ig2 { fill: #c8c6c4; stroke: #a19f9d; stroke-width: 1; }
.iz { fill: none; stroke: #605e5c; stroke-width: 1.4; }
.xl { fill: #107c41; }
.xl-t { fill: #fff; font: 700 12px "Liberation Sans", sans-serif; text-anchor: middle; }
.ol { fill: #fafafa; stroke: #3b3a39; stroke-width: 2; }
.ol2 { fill: none; stroke: #3b3a39; stroke-width: 2.2; }
.oc { fill: none; stroke: #d9762a; stroke-width: 1.2; }
.pl { fill: none; stroke: #2ca24c; stroke-width: 1.4; }
.cl { fill: none; stroke: #2b88d8; stroke-width: 1.2; }
.pn { fill: #8ac0ec; stroke: #2b80c8; stroke-width: 1.2; }
.rf { fill: none; stroke: #359a56; stroke-width: 1.5; }
.bl { fill: #83bdec; stroke: #1a6fb5; stroke-width: 1.2; }
.corn { fill: #2b88d8; }
.a-t { fill: #3a96dd; font: 400 21px "Open Sans", sans-serif; text-anchor: middle; }
.dg { fill: #e8e7e6; stroke: #c8c6c4; }
.dw { fill: #fafafa; stroke: #c8c6c4; }
.dl { fill: #cfe3f5; stroke: #cfe3f5; }
.fx { fill: #b3b0ad; font: italic 15px "Liberation Serif", serif; }
.calc-s { fill: #4a9fe0; stroke: #1a6fb5; }
.dots { fill: #3b3a39; }
.bolt { fill: #f7a733; stroke: #d9660e; stroke-width: .8; }
.lb { fill: none; stroke: #a9d3f2; stroke-width: 1.2; }
.lbf { fill: #c9e3f6; stroke: #a9d3f2; stroke-width: .8; }
.up { fill: none; stroke: #2b80c8; stroke-width: 1.2; }
.cp-a { fill: url(#cpa); }
.cp-b { fill: url(#cpb); }
.cp-w { fill: #fff; }
.collapse { position: absolute; right: 5px; top: 78px; width: 10px; height: 6px; }
.col { fill: none; stroke: #252423; stroke-width: 1.6; }

/* main */
.main { flex: 1; display: flex; min-height: 0; }
.rail { width: 41px; flex: none; background: #f3f2f1; border-right: 1px solid #d6d4d2; display: flex; flex-direction: column; }
.rail-btn { height: 40px; display: flex; align-items: center; justify-content: center; padding-right: 1px; }
.rail-on { box-shadow: inset 3px 0 0 #117865; }
.rail-i { width: 16px; height: 16px; }
.rk { fill: none; stroke: #252423; stroke-width: 1.1; }
.rg { fill: none; stroke: #7a7876; stroke-width: 1; }
.dax { fill: #7a7876; font: 700 5.500px "Liberation Sans", sans-serif; text-anchor: middle; }

.center { width: 1517px; flex: none; display: flex; flex-direction: column; }
.work { height: 820px; display: flex; flex: none; }
.canvas { width: 1317px; flex: none; background: #fff; position: relative; border-right: 1px solid #c8c6c4; overflow: hidden; }
.dots-top, .dots-bot { position: absolute; left: 1px; right: 0; height: 2px; border-top: 2px dotted #605e5c; }
.dots-top { top: 38px; }
.dots-bot { top: 780px; }
.v-line { position: absolute; left: 0; top: 40px; width: 760px; height: 500px; }
.hd { font: 700 15px "Open Sans", sans-serif; fill: #252423; }
.hs { font: 400 12px "Open Sans", sans-serif; fill: #b3b0ad; }
.grid { fill: none; stroke: #f0efee; stroke-width: 1.2; }
.yl { font: 10px "Open Sans", sans-serif; fill: #605e5c; text-anchor: end; letter-spacing: -.3px; }
.xl-l { font: 10px "Open Sans", sans-serif; fill: #605e5c; text-anchor: middle; letter-spacing: -.2px; }
.lg { font: 10px "Open Sans", sans-serif; fill: #a19f9d; }
.ln-g { fill: none; stroke: #1de20f; stroke-width: 2.2; }
.ln-k { stroke: #222; stroke-width: 1.2; }
.lg-g { fill: #1de20f; }
.lg-k { fill: #000; }
.lg-r { fill: #fd625e; }
.slicer { position: absolute; left: 13px; top: 568px; width: 340px; }
.dates { display: flex; gap: 7px; }
.date { width: 76px; height: 27px; border: 1px solid #eceae8; display: flex; align-items: center; justify-content: center; font-size: 12px; letter-spacing: -.22px; color: #252423; }
.track { width: 320px; height: 30px; margin: 5px 0 0 14px; }
.trk { stroke: #eeedec; stroke-width: 3; }
.trk-on { stroke: #666; stroke-width: 3; }
.hdl { fill: #fff; stroke: #666; stroke-width: 2; }
.v-kpi { position: absolute; left: 1059px; top: 70px; width: 220px; height: 90px; }
.kpi-n { font: 300 56px "Roboto", sans-serif; fill: #3dbb5b; }
.kpi-c { fill: none; stroke: #3dbb5b; stroke-width: 1.2; }
.kpi-t { font: 400 11px "Roboto", sans-serif; fill: #252423; }
.v-pie { position: absolute; left: 779px; top: 220px; width: 520px; height: 350px; }
.pie circle { fill: none; stroke-width: 139; }
.s1 { stroke: #01b8aa; } .s2 { stroke: #374649; } .s3 { stroke: #fd625e; } .s4 { stroke: #f2c80f; }
.s5 { stroke: #5f6b6d; } .s6 { stroke: #8ad4eb; } .s7 { stroke: #fe9666; } .s8 { stroke: #a66999; }
.s9 { stroke: #3599b8; } .s10 { stroke: #dfbfbf; } .s11 { stroke: #4ac5bb; } .s12 { stroke: #5f6b6d; }
.s13 { stroke: #fb8281; } .s14 { stroke: #f4d25a; } .s15 { stroke: #7f898a; } .s16 { stroke: #a4ddee; }
.s17 { stroke: #fdab89; } .s18 { stroke: #b687ac; } .s19 { stroke: #28738a; } .s20 { stroke: #a78f8f; }
.s21 { stroke: #168980; } .s22 { stroke: #293537; } .s23 { stroke: #bb4a4a; } .s24 { stroke: #d9822b; }
.ldr { fill: none; stroke: #bcbab8; stroke-width: 1; }
.pl-t { font: 10.500px "Roboto", sans-serif; fill: #777; }
.rule { position: absolute; left: 10px; top: 686px; width: 1296px; height: 3px; background: #000; }
.page-title { position: absolute; left: 9px; top: 712px; font-size: 20px; font-weight: 300; line-height: 28px; color: #414040; letter-spacing: -.6px; white-space: nowrap; }
.logo { position: absolute; left: 1089px; top: 705px; width: 220px; height: 50px; }
.logo-t { font: 200 50px "DejaVu Sans", sans-serif; fill: #262626; stroke: #262626; stroke-width: 1.7; }

/* filter pane */
.filter { width: 200px; flex: none; background: #fff; padding: 0 8px; }
.pane-head { height: 38px; display: flex; align-items: center; }
.pane-title { font-size: 15.500px; font-weight: 600; color: #252423; letter-spacing: -.35px; }
.f-ic { width: 16px; height: 15px; margin: -1px 8px 0 4px; }
.f-title { font-size: 15.500px; }
.pk { fill: none; stroke: #3b3a39; stroke-width: 1; }
.pk2 { fill: none; stroke: #3b3a39; stroke-width: 1; }
.eye { width: 13px; height: 10px; margin-left: auto; margin-right: 17px; }
.dbl { width: 12px; height: 12px; margin-left: auto; margin-right: 1px; }
.eye + .dbl { margin-left: 0; margin-right: 2px; }
.f-search { margin-top: 7px; height: 31px; width: 180px; border: 1px solid #c8c6c4; display: flex; align-items: center; padding-left: 11px; color: #605e5c; position: relative; }
.s-ic { width: 15px; height: 15px; margin-right: 14px; }
.f-search::after { content: ""; position: absolute; left: -9px; width: 200px; top: 33px; height: 1px; background: #c8c6c4; }
.f-label { display: flex; justify-content: space-between; height: 16px; line-height: 16px; color: #3b3a39; padding-right: 8px; }
.f-label-1 { margin-top: 22px; }
.f-label-2 { margin-top: 27px; }
.more { letter-spacing: 1.5px; margin-top: -4px; }
.f-drop { margin-top: 9px; width: 184px; height: 45px; border: 1px solid #c8c6c4; display: flex; align-items: center; justify-content: center; color: #252423; }

/* page bar */
.pagebar { height: 35px; background: #f3f2f1; display: flex; align-items: stretch; flex: none; }
.view-sw { width: 128px; display: flex; align-items: center; padding-left: 10px; flex: none; }
.view { height: 35px; display: flex; align-items: center; justify-content: center; width: 24px; padding-bottom: 5px; }
.view + .view { width: 14px; margin-left: 25px; }
.view-on { border-bottom: 2px solid #117865; height: 30px; align-self: flex-start; padding-bottom: 0; }
.view-i { width: 20px; height: 20px; }
.view + .view .view-i { width: 13px; height: 25px; }
.arr { width: 5px; height: 9px; margin-left: 20px; }
.arr-r { margin-left: 17px; }
.arr-f { fill: #d2d0ce; }
.ptab { display: flex; align-items: center; justify-content: center; background: #fff; font-size: 12px; }
.ptab-on { width: 93px; border-left: 1px solid #a19f9d; border-right: 1px solid #e1dfdd; border-bottom: 4px solid #117865; padding-top: 5px; }
.ptab-2 { width: 75px; padding-top: 2px; }
.ptab-add { width: 39px; background: #117865; display: flex; align-items: center; justify-content: center; }
.add-i { width: 11px; height: 11px; margin-top: -3px; }
.add { stroke: #fff; stroke-width: 2.4; fill: none; }

/* visualizations */
.viz { width: 182px; flex: none; background: #f3f2f1; border-left: 1px solid #e1dfdd; border-right: 1px solid #e1dfdd; }
.viz .pane-head, .data .pane-head { padding: 0 8px; }
.viz-sub { font-size: 12px; font-weight: 600; height: 16px; line-height: 16px; padding-left: 8px; color: #252423; letter-spacing: -.45px; }
.viz-build { margin-top: 3px; height: 45px; padding: 0 0 12px 8px; border-bottom: 1px solid #a19f9d; display: flex; position: relative; }
.build-on { width: 32px; height: 32px; background: #d8d6d4; border-radius: 2px; display: flex; align-items: center; justify-content: center; }
.build-i { width: 24px; height: 24px; }
.bt { stroke: #3b3a39; fill: none; stroke-width: 1; }
.bgn { fill: #117865; }
.bt2 { fill: none; stroke: #252423; stroke-width: 1; stroke-dasharray: 1.500 1; }
.fmt-i { width: 24px; height: 24px; margin: 4px 0 0 38px; }
.notch { position: absolute; left: 16px; bottom: -1px; width: 16px; height: 8px; }
.nt { fill: #f3f2f1; stroke: #a19f9d; stroke-width: 1; }
.vgrid { margin: 6px 0 0 6px; display: grid; grid-template-columns: repeat(6, 28px); grid-auto-rows: 28px; place-items: center; }
.vi { width: 18px; height: 18px; }
.a { fill: none; stroke: #3b3a39; stroke-width: 1; }
.a2 { fill: none; stroke: #605e5c; stroke-width: 1; }
.b { fill: #3a8fd9; stroke: #1f72ba; stroke-width: .7; }
.w { fill: #fff; stroke: #1f72ba; stroke-width: 1; }
.ww { fill: none; stroke: #3b3a39; stroke-width: 1; }
.g { fill: #b3b0ad; stroke: #8a8886; stroke-width: .6; }
.g2 { fill: none; stroke: #605e5c; stroke-width: 1; }
.hl { fill: #e1dfdd; }
.l { fill: none; stroke: #1f72ba; stroke-width: 1.3; }
.or { fill: #d9700e; }
.or2 { fill: none; stroke: #e8a070; stroke-width: 1; }
.bs2 { fill: none; stroke: #5aa9e6; stroke-width: 1; }
.dk { fill: #3b3a39; }
.dk2 { fill: #3b3a39; }
.lbx { fill: #8ac0ec; }
.piew { fill: #fff; stroke: #3b3a39; stroke-width: 1; }
.don { fill: none; stroke: #3a8fd9; stroke-width: 3.600; }
.don2 { fill: none; stroke: #b3b0ad; stroke-width: 3.600; }
.glb { fill: #fff; stroke: #3b3a39; stroke-width: 1; }
.grn { fill: #3e9c4e; }
.azr { fill: #4aa3e8; }
.azr2 { fill: #1f72ba; }
.gau { fill: #8ac0ec; stroke: #1f72ba; stroke-width: 1; }
.vt12 { font: 8px "Open Sans", sans-serif; fill: #3a8fd9; text-anchor: middle; }
.bs { fill: none; stroke: #2b80c8; stroke-width: 1.3; }
.tg { fill: #2fb96f; }
.tr { fill: #e53c3c; }
.tb { fill: none; stroke: #605e5c; stroke-width: .9; }
.bf { fill: #3a8fd9; }
.vr { font: 700 17px "Open Sans", sans-serif; fill: #1f72ba; text-anchor: middle; }
.vpy { font: 700 17px "Open Sans", sans-serif; fill: #1f72ba; text-anchor: middle; }
.qa2 { fill: #fff; stroke: #1f72ba; stroke-width: 1; }
.w2 { fill: #fff; }
.pa { fill: none; stroke: #9a4fb0; stroke-width: 1.2; }
.au { fill: #fff; stroke: #1f72ba; stroke-width: 1.1; }
.wf { fill: #fff; }
.xw { fill: none; stroke: #fff; stroke-width: 1.3; }
.more-row { height: 26px; line-height: 22px; padding-left: 14px; letter-spacing: 2.500px; font-weight: 700; color: #605e5c; }
.dash-line { margin: 4px 5px 0 6px; border-top: 1px dashed #d2d0ce; }
.custom { display: flex; gap: 10px; padding-left: 11px; height: 34px; padding-top: 8px; border-bottom: 1px solid #d2d0ce; }
.fields { padding: 9px 6px 0 4px; }
.fld-l { height: 16px; line-height: 16px; padding-left: 8px; color: #3b3a39; }
.fld-drop { margin-top: 5px; width: 170px; height: 28px; border: 1px dashed #c8c6c4; background: #fff; border-radius: 2px; display: flex; align-items: center; justify-content: center; color: #252423; }
.fld-d2 { margin-top: 9px; height: 26px; }
.fld-h { margin-top: 11px; height: 16px; line-height: 16px; padding-left: 8px; font-weight: 600; color: #3b3a39; letter-spacing: -.45px; }
.fld-row { display: flex; justify-content: space-between; line-height: 16px; padding: 0 15px 0 8px; }
.fld-r1 { margin-top: 9px; height: 16px; }
.fld-r2 { margin-top: 10px; height: 32px; }
.tog { width: 32px; height: 16px; border-radius: 8px; display: flex; align-items: center; flex: none; }
.tog-off { border: 1px solid #8a8886; background: #fff; padding-left: 4px; }
.tog-on { background: #117865; padding: 0 3px 0 4px; justify-content: space-between; }
.tog-c { width: 10px; height: 8px; }
.tc { fill: none; stroke: #fff; stroke-width: 2; }
.knob { width: 8px; height: 8px; background: #605e5c; border-radius: 50%; display: block; }
.knob-w { background: #fff; }

/* data */
.data { flex: 1; background: #f3f2f1; }
.d-search { margin: 8px 4px 0 5px; height: 23px; background: #fff; border: 1px solid #e1dfdd; border-bottom-color: #8a8886; border-radius: 3px; display: flex; align-items: center; padding-left: 12px; color: #605e5c; }
.d-ic { width: 14px; height: 14px; margin-right: 7px; }
.tree { margin-top: 9.500px; }
.node { height: 24px; display: flex; align-items: center; padding-left: 16px; white-space: nowrap; color: #3b3a39; }
.nc { width: 7px; height: 11px; margin-right: 6px; }
.nch { fill: none; stroke: #8a8886; stroke-width: 1; }
.nt-i { width: 12px; height: 12px; margin-right: 6px; }
.ntb { fill: none; stroke: #3b3a39; stroke-width: 1; }

/* status */
.status { height: 24px; flex: none; background: #f3f2f1; border-top: 1px solid #e1dfdd; display: flex; align-items: center; justify-content: space-between; padding: 0 18px 0 4px; position: relative; z-index: 2; }
.st-page { font-size: 11.500px; color: #484644; }
.st-zoom { display: flex; align-items: center; }
.z-minus { width: 3px; height: 3px; background: #605e5c; }
.z-track { width: 100px; height: 1px; background: #605e5c; margin-left: 7px; position: relative; }
.z-thumb { position: absolute; left: 49px; top: -6px; width: 3px; height: 13px; background: #605e5c; display: block; }
.z-plus { margin-left: 6px; font-size: 13px; color: #605e5c; }
.z-val { margin-left: 14px; font-size: 11.500px; color: #605e5c; letter-spacing: -.5px; }
.z-fit { width: 15px; height: 15px; margin-left: 14px; }
.zf1 { fill: none; stroke: #a19f9d; }
.zf2 { fill: none; stroke: #3b3a39; }
```
